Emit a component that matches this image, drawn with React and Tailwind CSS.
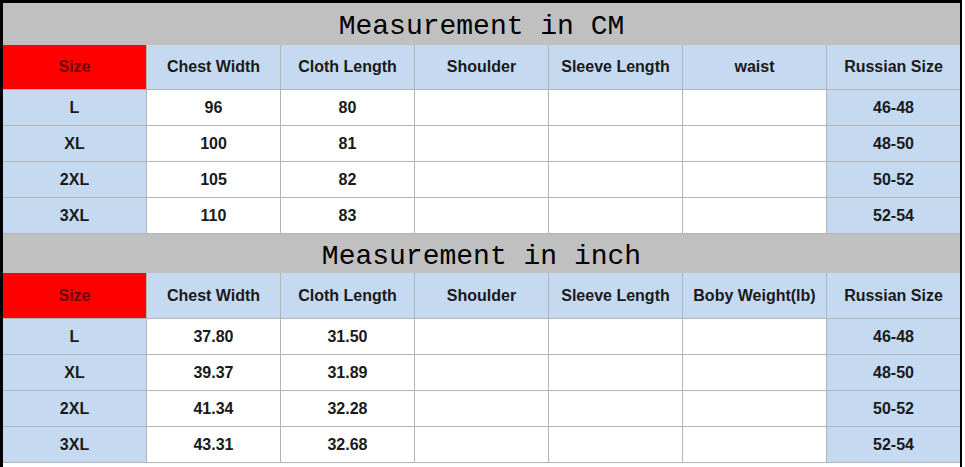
import React from "react";

const cols = "grid grid-cols-[144px_134px_134px_134px_134px_144px_133px]";
const line = "border-[#b4b4b4]";
const font = { fontFamily: '"Liberation Sans", Arial, sans-serif' };

function Section({ title, titleH, titlePad, headH, headers, rows }) {
  return (
    <>
      <div
        className={`col-span-7 bg-[#c0c0c0] flex items-center justify-center text-[28px] text-black ${titleH}`}
        style={{ fontFamily: '"Liberation Mono", "Courier New", monospace' }}
      >
        <span className={titlePad}>{title}</span>
      </div>
      {headers.map((h, i) => (
        <div
          key={h}
          className={`${headH} flex items-center justify-center font-bold text-[16px] border-b ${line} ${
            i < 6 ? "border-r" : ""
          } ${i === 0 ? "bg-[#ff0000] text-[#6a0606]" : "bg-[#c5d9f1] text-[#1a1a1a]"}`}
        >
          {h}
        </div>
      ))}
      {rows.map((r) =>
        r.map((c, i) => (
          <div
            key={r[0] + i}
            className={`h-[36px] flex items-center justify-center pt-[1px] font-bold text-[16px] text-[#1a1a1a] border-b ${line} ${
              i < 6 ? "border-r" : ""
            } ${i === 0 || i === 6 ? "bg-[#c5d9f1]" : "bg-white"}`}
          >
            {c}
          </div>
        ))
      )}
    </>
  );
}

export default function App() {
  const h1 = ["Size", "Chest Width", "Cloth Length", "Shoulder", "Sleeve Length", "waist", "Russian Size"];
  const h2 = ["Size", "Chest Width", "Cloth Length", "Shoulder", "Sleeve Length", "Boby Weight(lb)", "Russian Size"];
  const r1 = [
    ["L", "96", "80", "", "", "", "46-48"],
    ["XL", "100", "81", "", "", "", "48-50"],
    ["2XL", "105", "82", "", "", "", "50-52"],
    ["3XL", "110", "83", "", "", "", "52-54"],
  ];
  const r2 = [
    ["L", "37.80", "31.50", "", "", "", "46-48"],
    ["XL", "39.37", "31.89", "", "", "", "48-50"],
    ["2XL", "41.34", "32.28", "", "", "", "50-52"],
    ["3XL", "43.31", "32.68", "", "", "", "52-54"],
  ];
  return (
    <div className="w-[965px] h-[467px] bg-white overflow-hidden" style={font}>
      <div className="w-[962px] h-[467px] border-l-[3px] border-t-[3px] border-r-[2px] border-black bg-white">
        <div className={cols}>
          <Section title="Measurement in CM" titleH="h-[42px]" titlePad="pt-[6px]" headH="h-[45px]" headers={h1} rows={r1} />
          <Section title="Measurement in inch" titleH="h-[39px]" titlePad="pt-[7px]" headH="h-[46px]" headers={h2} rows={r2} />
        </div>
      </div>
    </div>
  );
}
